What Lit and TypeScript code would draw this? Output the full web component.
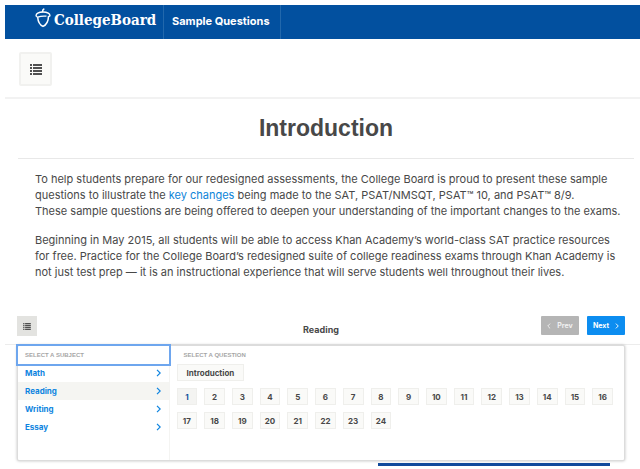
import { LitElement, html, css, svg } from "lit";
import { customElement, state } from "lit/decorators.js";
import { classMap } from "lit/directives/class-map.js";

const listIcon = html`<svg class="list-icon" viewBox="0 0 12 11" aria-hidden="true">
  ${[0, 3, 6, 9].map((y) => svg`<rect x="0" y=${y} width="2" height="2"></rect><rect x="3" y=${y} width="9" height="2"></rect>`)}
</svg>`;

const chevron = (d: string) => html`<svg class="chevron" viewBox="0 0 5 8" aria-hidden="true"><path d=${d}></path></svg>`;
const RIGHT = "M1 .8 4.2 4 1 7.2";
const LEFT = "M4 .8 .8 4 4 7.2";

@customElement("app-root")
export class AppRoot extends LitElement {
  @state() private subject = "Reading";
  @state() private question = 1;

  private subjects = ["Math", "Reading", "Writing", "Essay"];

  static styles = css`
    :host {
      display: block;
      padding: 5px 0 0 5px;
      background: #fff;
      color: #484848;
      font-family: Inter, "Liberation Sans", Arial, sans-serif;
      font-size: 11px;
    }
    * { box-sizing: border-box; }
    button { font: inherit; color: inherit; margin: 0; padding: 0; cursor: pointer; }
    a { color: #0d84d8; text-decoration: none; }
    h1, h2, h3, p, ul, ol { margin: 0; padding: 0; }
    ul, ol { list-style: none; }

    .topbar {
      display: flex;
      height: 34px;
      padding-left: 30px;
      background: #02509f;
      color: #fff;
    }
    .topbar a { display: flex; align-items: center; color: #fff; }
    .brand { width: 128px; gap: 3px; padding-bottom: 4px; font: bold 15px "DejaVu Serif Condensed", "DejaVu Serif", serif; }
    .acorn { width: 16px; height: 20px; margin-top: -4px; }
    .section {
      padding: 0 10px 2px 8px;
      border: solid #2268ac;
      border-width: 0 1px;
      font-weight: 700;
    }

    .toolbar { padding: 13px 14px 11px; border-bottom: 2px solid #f2f2f2; }
    .menu {
      display: grid;
      place-items: center;
      width: 33px;
      height: 34px;
      border: 2px solid #f1f1ef;
      border-radius: 2px;
      background: #fafaf8;
    }
    .list-icon { width: 12px; height: 11px; fill: #505050; }

    h1 {
      margin: 0 6px 0 13px;
      padding: 15px 0 16px;
      border-bottom: 1px solid #e8e8e8;
      font-family: "Liberation Sans", Arial, sans-serif;
      font-size: 23px;
      line-height: 28px;
      text-align: center;
    }
    .intro { padding: 12px 10px 0 30px; line-height: 16px; }
    .intro p + p { margin-top: 13px; }

    .quiz-head {
      display: grid;
      grid-template-columns: 1fr auto 1fr;
      margin-top: 36px;
      padding: 0 15px 0 12px;
      height: 29px;
      border-bottom: 1px solid #ececec;
    }
    .menu.small { width: 20px; height: 20px; border: 0; border-radius: 0; background: #e3e3e0; }
    .small .list-icon { width: 8px; height: 7px; }
    h2 { padding-top: 7px; font-size: 9px; line-height: 14px; }
    .pager { display: flex; justify-content: flex-end; gap: 8px; }
    .pager button {
      display: flex;
      align-items: center;
      justify-content: center;
      gap: 6px;
      width: 38px;
      height: 19px;
      border: 0;
      border-radius: 1px;
      background: #0c8df0;
      color: #fff;
      font-size: 7px;
      font-weight: bold;
    }
    .pager button:disabled { background: #b5b5b5; color: #f0f0f0; }
    .chevron { width: 5px; height: 8px; fill: none; stroke: currentColor; stroke-width: 1.2; }
    .pager .chevron { width: 4px; height: 6px; }

    .panel {
      display: grid;
      grid-template-columns: 1fr 3fr;
      min-height: 116px;
      margin: 0 15px 0 12px;
      border: 1px solid #dcdcdc;
      border-radius: 2px;
      background: #fff;
      box-shadow: 0 0 3px #bdbdbd;
    }
    h3 { color: #a6a6a6; font: bold 6px/18px "Liberation Sans", Arial, sans-serif; padding: 0 7px; }
    .subjects { border-right: 1px solid #f4f4f2; }
    .subjects h3 { outline: 2px solid #6ea6ee; }
    .subjects button {
      display: flex;
      align-items: center;
      justify-content: space-between;
      width: 100%;
      height: 18px;
      padding: 0 8px 0 7px;
      border: 0;
      background: none;
      color: #0d84e0;
      font-size: 8px;
      font-weight: bold;
    }
    .subjects .current { background: #f5f5f2; }
    .questions { padding: 0 11px 0 7px; }
    .questions button {
      height: 17px;
      border: 1px solid #efefec;
      background: #fafaf8;
      font-size: 8px;
      font-weight: bold;
    }
    .questions .intro-link { padding: 0 9px; }
    ol { display: grid; grid-template-columns: repeat(16, 1fr); gap: 7px; margin-top: 7px; }
    .questions li { display: grid; }
    .questions .current { color: #124f9c; background: #f4f4f2; }
    .strip { width: 232px; height: 3px; margin: 2px 30px 0 auto; background: #114a9c; }
  `;

  render() {
    return html`
      <header class="topbar">
        <a class="brand" href="#home">
          <svg class="acorn" viewBox="0 0 16 20" fill="none" stroke="#fff" aria-hidden="true">
            <path d="M7.4 4.2C7.4 2.5 8 1.2 9.3.7" stroke-width="1.5"></path>
            <path d="M1.2 8.2C.5 5.8 3.8 4 8 4s7.5 1.8 6.8 4.2" stroke-width="1.4"></path>
            <path d="M1.2 8.2 2.7 9.2C6 7.9 8.5 7.8 11.5 8.2" stroke-width="1.3"></path>
            <path d="M2.7 9.2C3 13.8 4.7 16.8 8 18.4c3.4-1.6 5.3-5 5.5-9.8l1.3-.5" stroke-width="1.5"></path>
          </svg>
          <span>CollegeBoard</span>
        </a>
        <a class="section" href="#sample">Sample Questions</a>
      </header>
      <div class="toolbar"><button class="menu" aria-label="Menu">${listIcon}</button></div>
      <main>
        <h1>Introduction</h1>
        <div class="intro">
          <p>
            To help students prepare for our redesigned assessments, the College Board is proud to present these sample<br />
            questions to illustrate the <a href="#changes">key changes</a> being made to the SAT, PSAT/NMSQT, PSAT™ 10, and PSAT™ 8/9.<br />
            These sample questions are being offered to deepen your understanding of the important changes to the exams.
          </p>
          <p>
            Beginning in May 2015, all students will be able to access Khan Academy’s world-class SAT practice resources<br />
            for free. Practice for the College Board’s redesigned suite of college readiness exams through Khan Academy is<br />
            not just test prep — it is an instructional experience that will serve students well throughout their lives.
          </p>
        </div>
        <div class="quiz-head">
          <button class="menu small" aria-label="Question list">${listIcon}</button>
          <h2>${this.subject}</h2>
          <div class="pager">
            <button ?disabled=${this.question === 1} @click=${() => this.question--}>${chevron(LEFT)} Prev</button>
            <button @click=${() => this.question++}>Next ${chevron(RIGHT)}</button>
          </div>
        </div>
        <section class="panel">
          <div class="subjects">
            <h3>SELECT A SUBJECT</h3>
            <ul>
              ${this.subjects.map((s) => html`<li>
                <button class=${classMap({ current: s === this.subject })} @click=${() => (this.subject = s)}>${s} ${chevron(RIGHT)}</button>
              </li>`)}
            </ul>
          </div>
          <div class="questions">
            <h3>SELECT A QUESTION</h3>
            <button class="intro-link">Introduction</button>
            <ol>
              ${Array.from({ length: 24 }, (_, i) => i + 1).map((n) => html`<li>
                <button class=${classMap({ current: n === this.question })} @click=${() => (this.question = n)}>${n}</button>
              </li>`)}
            </ol>
          </div>
        </section>
        <div class="strip"></div>
      </main>
    `;
  }
}
